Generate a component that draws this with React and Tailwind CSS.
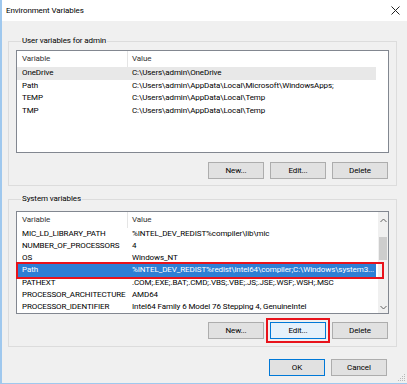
import React from 'react';

const font = { fontFamily: 'Roboto, "Noto Sans", sans-serif' };

const userVars = [
  ['OneDrive', 'C:\\Users\\admin\\OneDrive'],
  ['Path', 'C:\\Users\\admin\\AppData\\Local\\Microsoft\\WindowsApps;'],
  ['TEMP', 'C:\\Users\\admin\\AppData\\Local\\Temp'],
  ['TMP', 'C:\\Users\\admin\\AppData\\Local\\Temp'],
];

const systemVars = [
  ['MIC_LD_LIBRARY_PATH', '%INTEL_DEV_REDIST%compiler\\lib\\mic'],
  ['NUMBER_OF_PROCESSORS', '4'],
  ['OS', 'Windows_NT'],
  ['Path', '%INTEL_DEV_REDIST%redist\\intel64\\compiler;C:\\Windows\\system3...'],
  ['PATHEXT', '.COM;.EXE;.BAT;.CMD;.VBS;.VBE;.JS;.JSE;.WSF;.WSH;.MSC'],
  ['PROCESSOR_ARCHITECTURE', 'AMD64'],
  ['PROCESSOR_IDENTIFIER', 'Intel64 Family 6 Model 76 Stepping 4, GenuineIntel'],
];

function Btn({ children, focused, defaultBtn, marked }) {
  let cls = 'w-[56px] h-[17px] flex items-center justify-center border text-[8px] tracking-[-0.1px] text-black ';
  if (focused) cls += 'bg-[#e5f1fb] border-[#0078d7] ';
  else if (defaultBtn) cls += 'bg-[#e1e1e1] border-[#0078d7] ';
  else cls += 'bg-[#e1e1e1] border-[#adadad] ';
  if (marked) cls += 'outline-2 outline-offset-2 outline-[#e8131b] ';
  return <div className={cls}>{children}</div>;
}

function Row({ name, value, selected, hover, marked }) {
  let cls = 'relative flex items-center h-[12.5px] w-[359px] text-[8px] tracking-[-0.1px] leading-none whitespace-nowrap ';
  if (selected) cls += 'bg-[#2d7fd5] text-white ';
  else if (hover) cls += 'bg-[#e8e8e8] text-black ';
  else cls += 'text-black ';
  return (
    <div className={cls}>
      <div className="w-[111px] pl-[5px] overflow-hidden">{name}</div>
      <div className="flex-1 pl-[4px] overflow-hidden">{value}</div>
      {marked && (
        <div className="absolute left-[-1px] top-[-2px] w-[368px] h-[17px] border-2 border-[#e8131b]" />
      )}
    </div>
  );
}

function Header() {
  return (
    <div className="flex h-[16px] w-[359px] items-center text-[8px] tracking-[-0.1px] text-[#333] shrink-0">
      <div className="w-[111px] pl-[5px] h-full flex items-center border-r border-[#e5e5e5]">Variable</div>
      <div className="pl-[4px]">Value</div>
    </div>
  );
}

function Scrollbar() {
  return (
    <div className="w-[10px] h-full bg-[#f0f0f0] flex flex-col items-center">
      <div className="h-[16px] flex items-center justify-center">
        <svg width="7" height="5" viewBox="0 0 7 5"><path d="M0.5 4 L3.5 1 L6.5 4" fill="none" stroke="#606060" strokeWidth="1" /></svg>
      </div>
      <div className="mt-[9px] w-[8px] h-[23px] bg-[#cdcdcd]" />
      <div className="flex-1" />
      <div className="h-[12px] flex items-center justify-center">
        <svg width="7" height="5" viewBox="0 0 7 5"><path d="M0.5 1 L3.5 4 L6.5 1" fill="none" stroke="#606060" strokeWidth="1" /></svg>
      </div>
    </div>
  );
}

export default function App() {
  return (
    <div
      className="w-[407px] h-[384px] overflow-hidden bg-[#f0f0f0] border-l-2 border-b border-[#9fc8ee] flex flex-col relative"
      style={font}
    >
      {/* Title bar */}
      <div className="h-[21px] bg-white flex items-center justify-between pl-[4px] pr-[7px] shrink-0">
        <span className="text-[8px] tracking-[-0.1px] text-black">Environment Variables</span>
        <svg width="9" height="9" viewBox="0 0 9 9">
          <path d="M0.5 0.5 L8.5 8.5 M8.5 0.5 L0.5 8.5" stroke="#222" strokeWidth="1" />
        </svg>
      </div>

      {/* User variables group */}
      <fieldset className="ml-[6px] w-[389px] mt-[14px] border border-[#dcdcdc] px-[7px] pb-[6px]">
        <legend className="ml-[5px] px-[1px] text-[8px] tracking-[-0.1px] leading-[12px] text-black">User variables for admin</legend>
        <div className="mt-[3px] h-[103px] bg-white border border-[#828790] flex flex-col">
          <Header />
          {userVars.map(([n, v], i) => (
            <Row key={n} name={n} value={v} hover={i === 0} />
          ))}
        </div>
        <div className="mt-[9px] flex justify-end gap-[6px] pr-[1px]">
          <Btn>New...</Btn>
          <Btn>Edit...</Btn>
          <Btn>Delete</Btn>
        </div>
      </fieldset>

      {/* System variables group */}
      <fieldset className="ml-[6px] w-[389px] mt-[7px] border border-[#dcdcdc] px-[7px] pb-[7px]">
        <legend className="ml-[5px] px-[1px] text-[8px] tracking-[-0.1px] leading-[12px] text-black">System variables</legend>
        <div className="mt-[6px] h-[103px] bg-white border border-[#828790] flex">
          <div className="flex-1 flex flex-col">
            <Header />
            {systemVars.map(([n, v]) => (
              <Row key={n} name={n} value={v} selected={n === 'Path'} marked={n === 'Path'} />
            ))}
          </div>
          <Scrollbar />
        </div>
        <div className="mt-[8px] flex justify-end gap-[6px] pr-[1px]">
          <Btn>New...</Btn>
          <Btn focused marked>Edit...</Btn>
          <Btn>Delete</Btn>
        </div>
      </fieldset>

      {/* Dialog buttons */}
      <div className="mt-[12px] flex justify-end gap-[6px] pr-[20px]">
        <Btn defaultBtn>OK</Btn>
        <Btn>Cancel</Btn>
      </div>

      {/* Resize grip */}
      <svg className="absolute right-[1px] bottom-[1px]" width="8" height="8" viewBox="0 0 8 8">
        <g fill="#b8b8b8">
          <rect x="6" y="0" width="1" height="1" />
          <rect x="4" y="2" width="1" height="1" />
          <rect x="6" y="2" width="1" height="1" />
          <rect x="2" y="4" width="1" height="1" />
          <rect x="4" y="4" width="1" height="1" />
          <rect x="6" y="4" width="1" height="1" />
          <rect x="0" y="6" width="1" height="1" />
          <rect x="2" y="6" width="1" height="1" />
          <rect x="4" y="6" width="1" height="1" />
          <rect x="6" y="6" width="1" height="1" />
        </g>
      </svg>
    </div>
  );
}
